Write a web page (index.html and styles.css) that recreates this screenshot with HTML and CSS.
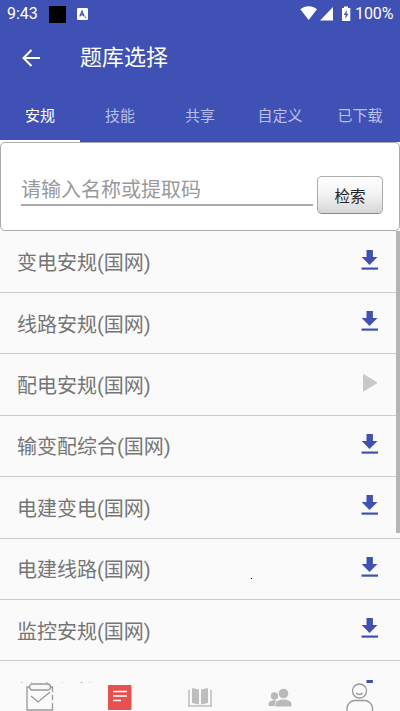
FILE: index.html
```html
<!DOCTYPE html>
<html lang="zh-CN">
<head>
<meta charset="utf-8">
<title>题库选择</title>
<link rel="stylesheet" href="styles.css">
</head>
<body>
<svg width="0" height="0" class="defs">
  <symbol id="download" viewBox="0 0 18 22"><path d="M5.5 1h6.400v7H16.500l-8 8L.7 8h4.800z"/><path d="M.5 18.500H17v2.200H.5z"/></symbol>
</svg>
<div class="app">
  <header class="top">
    <div class="status">
      <span class="time">9:43</span>
      <span class="block"></span>
      <svg class="badge" width="11" height="12" viewBox="0 0 11 12"><rect width="11" height="12" rx="1.2" fill="#fff"/><path d="M2.8 8.600 5 3.200 7.200 8.600M3.600 6.900h2.800M8 9.300h1" fill="none" stroke="#3f51b5" stroke-width="1.2"/></svg>
      <svg class="signals" width="52" height="17" viewBox="0 0 52 17" fill="#fff"><path d="M.3 3.200C5-.9 12.300-.9 17 3.200L8.700 14z"/><path d="M33 1v13.500H20z"/><path d="M42 2h2V.5h4V2h2.300v13H42z"/><path d="M47 3.800 43.800 9h2l-.7 4 3.400-5.300h-2.100z" fill="#3f51b5"/></svg>
      <span class="percent">100%</span>
    </div>
    <div class="bar">
      <svg width="18" height="18" viewBox="0 0 18 18" fill="none" stroke="#fff" stroke-width="2"><path d="M18 9H1.500M9.500 1 1.500 9l8 8"/></svg>
      <h1>题库选择</h1>
    </div>
    <nav class="tabs">
      <span class="tab active">安规</span><span class="tab">技能</span><span class="tab">共享</span><span class="tab">自定义</span><span class="tab">已下载</span>
    </nav>
  </header>
  <section class="search">
    <div class="field">请输入名称或提取码</div>
    <button class="go">检索</button>
  </section>
  <main class="list">
    <div class="row"><span>变电安规(国网)</span><svg class="dl"><use href="#download"/></svg></div>
    <div class="row"><span>线路安规(国网)</span><svg class="dl"><use href="#download"/></svg></div>
    <div class="row"><span>配电安规(国网)</span><svg class="play" viewBox="0 0 16 20"><path d="M1.500 1.500v16.600L15 9.800z" fill="#c8c8c8" stroke="#c8c8c8" stroke-linejoin="round"/></svg></div>
    <div class="row"><span>输变配综合(国网)</span><svg class="dl"><use href="#download"/></svg></div>
    <div class="row"><span>电建变电(国网)</span><svg class="dl"><use href="#download"/></svg></div>
    <div class="row"><span>电建线路(国网)</span><svg class="dl"><use href="#download"/></svg></div>
    <div class="row"><span>监控安规(国网)</span><svg class="dl"><use href="#download"/></svg></div>
    <div class="row"><span>继电保护</span><svg class="dl"><use href="#download"/></svg></div>
    <i class="scrollbar"></i>
    <i class="speck"></i>
  </main>
  <footer class="bottom">
    <span><svg width="28" height="28" viewBox="0 0 28 28" fill="none" stroke="#999" stroke-width="1.300"><path d="M4 4H1v23h25.500v-7M26.500 17v-5M26.500 9V4H24"/><rect x="3.500" y="1" width="21" height="6" rx="3"/><path d="m5 13 7 6 12-10"/></svg></span>
    <span><svg width="24" height="28" viewBox="0 0 24 28"><rect y="2" width="23.500" height="25" rx="1" fill="#e8504f"/><path d="M5 8.500h14M5 13h14M5 17.500h8" stroke="#fff" stroke-width="1.400"/></svg></span>
    <span><svg width="24" height="28" viewBox="0 0 24 28" fill="#bdbdbd"><path d="m4 5 7 1.500v15L4 20zM20 5l-7 1.500v15l7-1.500z"/><path d="M1 7v16h22V7" fill="none" stroke="#bdbdbd" stroke-width="1.500"/></svg></span>
    <span><svg width="24" height="28" viewBox="0 0 24 28" fill="#b9b9b9"><circle cx="6.500" cy="13" r="3.700"/><circle cx="15.500" cy="10.500" r="4.800"/><path d="M.5 23v-2c0-2.500 3-4 6.500-3.800L8.500 18C7 19 6.700 21 6.700 23z"/><path d="M7.500 23.500V21c0-6 16-6 16 0v2.500z"/></svg></span>
    <span><svg width="28" height="28" viewBox="0 0 28 28" fill="none" stroke="#999" stroke-width="1.300"><circle cx="13.500" cy="8" r="7"/><path d="M10.500 10c1.500 2 4.500 2 6 0M1 28v-3c0-4 4-7.500 8-7.500h9.500c4 0 8 3.500 8 7.500v3"/></svg></span>
  </footer>
</div>
</body>
</html>
```

FILE: styles.css
```css
* { box-sizing: border-box; }
body { margin: 0; font-family: Roboto, "Noto Sans CJK SC", sans-serif; background: #fafafa; }
.defs { position: absolute; }
.app { width: 400px; height: 711px; overflow: hidden; display: flex; flex-direction: column; }
.top { background: #3f51b5; height: 142px; flex: none; color: #fff; display: flex; flex-direction: column; }
.status { height: 28px; display: flex; align-items: center; padding: 0 7px; font-size: 16px; line-height: 28px; }
.time { width: 42px; }
.block { width: 17px; height: 17px; background: #000; }
.badge { margin-left: 11px; }
.signals { margin-left: auto; }
.percent { margin-left: 3px; width: 38px; letter-spacing: -.1px; }
.bar { height: 60px; display: flex; align-items: center; padding-left: 22px; }
h1 { margin: 0 0 0 40px; font-size: 22px; font-weight: 400; line-height: 32px; }
.tabs { flex: 1; display: grid; grid-template-columns: repeat(5, 80px); }
.tab { text-align: center; font-size: 15px; line-height: 56px; height: 54px; color: #b7c0ea; }
.tab.active { color: #fff; border-bottom: 2px solid #fff; }
.search { height: 89px; flex: none; background: #fff; border: 1px solid #aaa; border-radius: 5px; display: flex; padding: 24px 16px 0 20px; }
.field { width: 292px; height: 39px; border-bottom: 2px solid #aaa; font-size: 20px; line-height: 46px; color: #999; }
.go { margin: 9px 0 0 4px; padding: 0; width: 66px; height: 38px; border: 1px solid #aaa; border-bottom-color: #888; border-radius: 5px; background: linear-gradient(#fff, #f2f2f2 50%, #d6d6d6); font: 15.500px/34px "Noto Sans CJK SC", sans-serif; color: #222; }
.list { height: 452px; flex: none; position: relative; overflow: hidden; padding-top: .4px; }
.row { height: 61.450px; display: flex; align-items: center; justify-content: space-between; padding: 0 21px 0 17px; border-bottom: 1px solid #ccc; font-size: 20px; color: #757575; }
.dl { width: 18px; height: 22px; margin-top: -4px; fill: #3f51b5; }
.play { width: 16px; height: 20px; margin-right: 1px; margin-top: -3px; }
.scrollbar { position: absolute; right: 0; top: 0; width: 4px; height: 302px; background: #b5b5b5; }
.speck { position: absolute; left: 251px; top: 347px; width: 1px; height: 1px; background: #000; }
.bottom { flex: none; height: 28px; display: grid; grid-template-columns: repeat(5, 80px); background: #fafafa; }
.bottom span { display: flex; justify-content: center; }
```
